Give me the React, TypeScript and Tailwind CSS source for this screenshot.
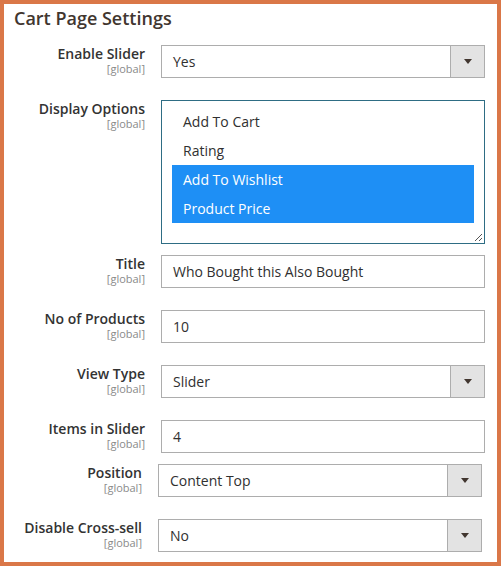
const font = "font-['Open_Sans',sans-serif]";

function FieldLabel({ text }: { text: string }) {
  return (
    <div className="w-[142px] shrink-0 pr-px text-right">
      <div className="text-[14px] leading-[18px] font-semibold text-[#333333]">{text}</div>
      <div className="text-[11px] leading-[12px] text-[#8a8a8a]">[global]</div>
    </div>
  );
}

function TextBox({ value }: { value: string }) {
  return (
    <div className="flex h-[33px] w-[324px] items-center border border-[#adadad] bg-white pl-[11px] text-[14px] text-[#303030]">
      {value}
    </div>
  );
}

function SelectBox({ value }: { value: string }) {
  return (
    <div className="flex h-[33px] w-[324px] border border-[#adadad] bg-white text-[14px] text-[#303030]">
      <div className="flex flex-1 items-center pl-[11px]">{value}</div>
      <div className="flex w-[34px] items-center justify-center border-l border-[#adadad] bg-[#e3e3e3]">
        <svg width="8" height="5" viewBox="0 0 8 5">
          <path d="M0 0h8L4 5z" fill="#41362f" />
        </svg>
      </div>
    </div>
  );
}

const options = [
  { label: "Add To Cart", selected: false },
  { label: "Rating", selected: false },
  { label: "Add To Wishlist", selected: true },
  { label: "Product Price", selected: true },
];

function MultiSelect() {
  return (
    <div className="relative h-[144px] w-[324px] border border-[#2e6d84] bg-white px-[10px] pt-[6px]">
      {options.map((o) => (
        <div
          key={o.label}
          className={
            o.selected
              ? "flex h-[29px] items-center bg-[#1e8ff5] pl-[11px] text-[14px] text-white"
              : "flex h-[29px] items-center pl-[11px] text-[14px] text-[#303030]"
          }
        >
          {o.label}
        </div>
      ))}
      <svg className="absolute bottom-[2px] right-[2px]" width="8" height="8" viewBox="0 0 8 8">
        <path d="M1 8L8 1M5 8L8 5" stroke="#555" strokeWidth="1" />
      </svg>
    </div>
  );
}

function Row({
  label,
  className,
  children,
}: {
  label: string;
  className: string;
  children: React.ReactNode;
}) {
  return (
    <div className={"flex items-start gap-[15px] " + className}>
      <FieldLabel text={label} />
      {children}
    </div>
  );
}

export default function App() {
  return (
    <div className={"h-[566px] w-[501px] border-4 border-[#da7748] bg-white " + font}>
      <div className="pl-[10px] pt-[2px] text-[18px] leading-[24px] font-semibold text-[#41362f]">
        Cart Page Settings
      </div>
      <Row label="Enable Slider" className="mt-[15px]">
        <SelectBox value="Yes" />
      </Row>
      <Row label="Display Options" className="mt-[22px]">
        <MultiSelect />
      </Row>
      <Row label="Title" className="mt-[11px]">
        <TextBox value="Who Bought this Also Bought" />
      </Row>
      <Row label="No of Products" className="mt-[22px]">
        <TextBox value="10" />
      </Row>
      <Row label="View Type" className="mt-[22px]">
        <SelectBox value="Slider" />
      </Row>
      <Row label="Items in Slider" className="mt-[22px]">
        <TextBox value="4" />
      </Row>
      <Row label="Position" className="mt-[11px] -ml-[3px]">
        <SelectBox value="Content Top" />
      </Row>
      <Row label="Disable Cross-sell" className="mt-[22px] -ml-[3px]">
        <SelectBox value="No" />
      </Row>
    </div>
  );
}
